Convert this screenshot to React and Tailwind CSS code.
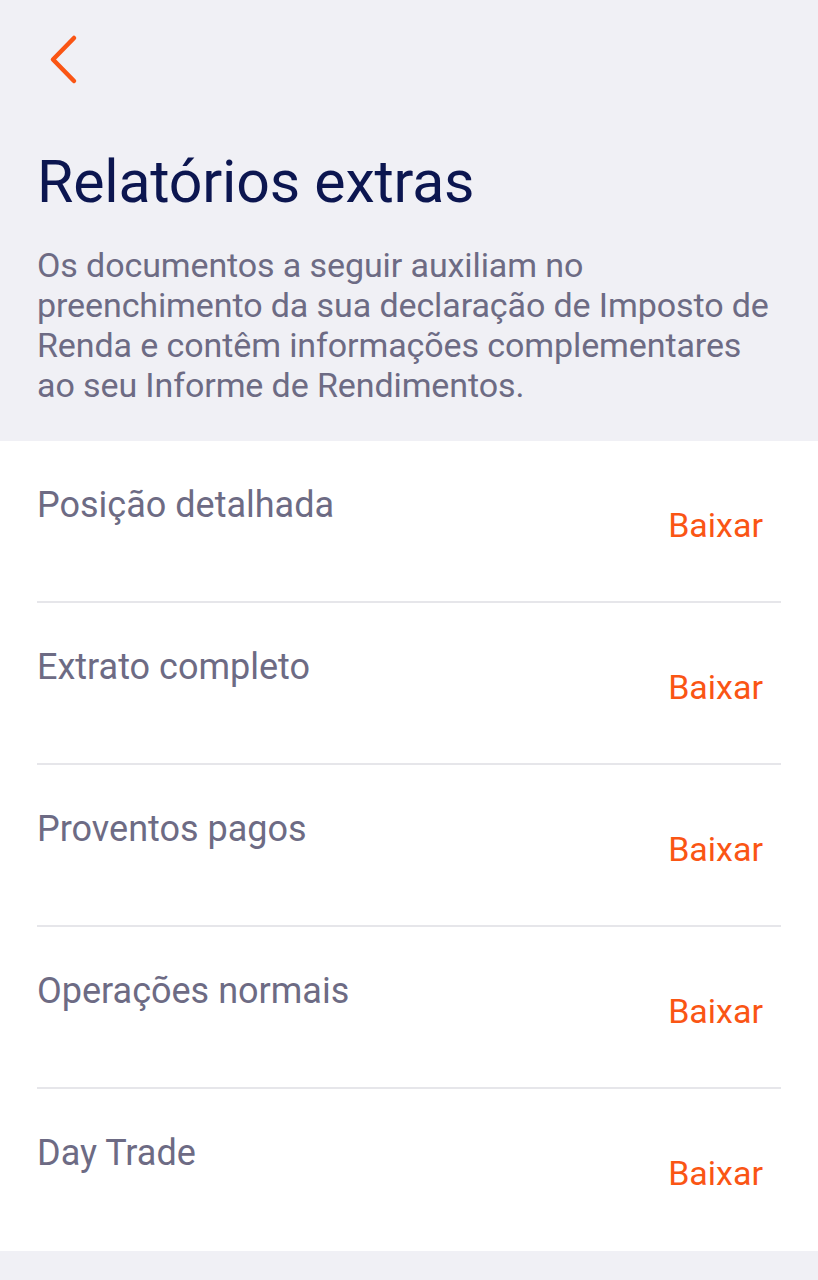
import React from "react";

const rows = [
  "Posição detalhada",
  "Extrato completo",
  "Proventos pagos",
  "Operações normais",
  "Day Trade",
];

export default function App() {
  return (
    <div
      className="w-[818px] h-[1280px] bg-[#f0f0f5] flex flex-col"
      style={{ fontFamily: "Roboto, 'Noto Sans', sans-serif" }}
    >
      <div className="px-[37px] pt-[34px] pb-[36px]">
        <svg width="34" height="52" viewBox="0 0 34 52" className="ml-[10px]">
          <path
            d="M27 4 L6 25.5 L27 47"
            fill="none"
            stroke="#fa5514"
            strokeWidth="4.5"
            strokeLinecap="round"
            strokeLinejoin="round"
          />
        </svg>
        <h1 className="mt-[64px] text-[59px] leading-[64px] text-[#0c1650] tracking-[-0.2px] whitespace-nowrap">
          Relatórios extras
        </h1>
        <p className="mt-[31px] text-[34px] leading-[40px] text-[#6d6b84] tracking-[-0.1px] whitespace-nowrap">
          Os documentos a seguir auxiliam no
          <br />
          preenchimento da sua declaração de Imposto de
          <br />
          Renda e contêm informações complementares
          <br />
          ao seu Informe de Rendimentos.
        </p>
      </div>
      <div className="bg-white">
        {rows.map((r, i) => (
          <div
            key={r}
            className={`mx-[37px] h-[162px] flex justify-between ${
              i < rows.length - 1 ? "border-b-2 border-[#e6e6ea]" : ""
            }`}
          >
            <span className="mt-[42px] text-[36px] leading-[44px] text-[#6d6b84]">
              {r}
            </span>
            <span className="mt-[64px] mr-[18px] text-[34px] leading-[40px] text-[#fa5514]">
              Baixar
            </span>
          </div>
        ))}
      </div>
    </div>
  );
}
